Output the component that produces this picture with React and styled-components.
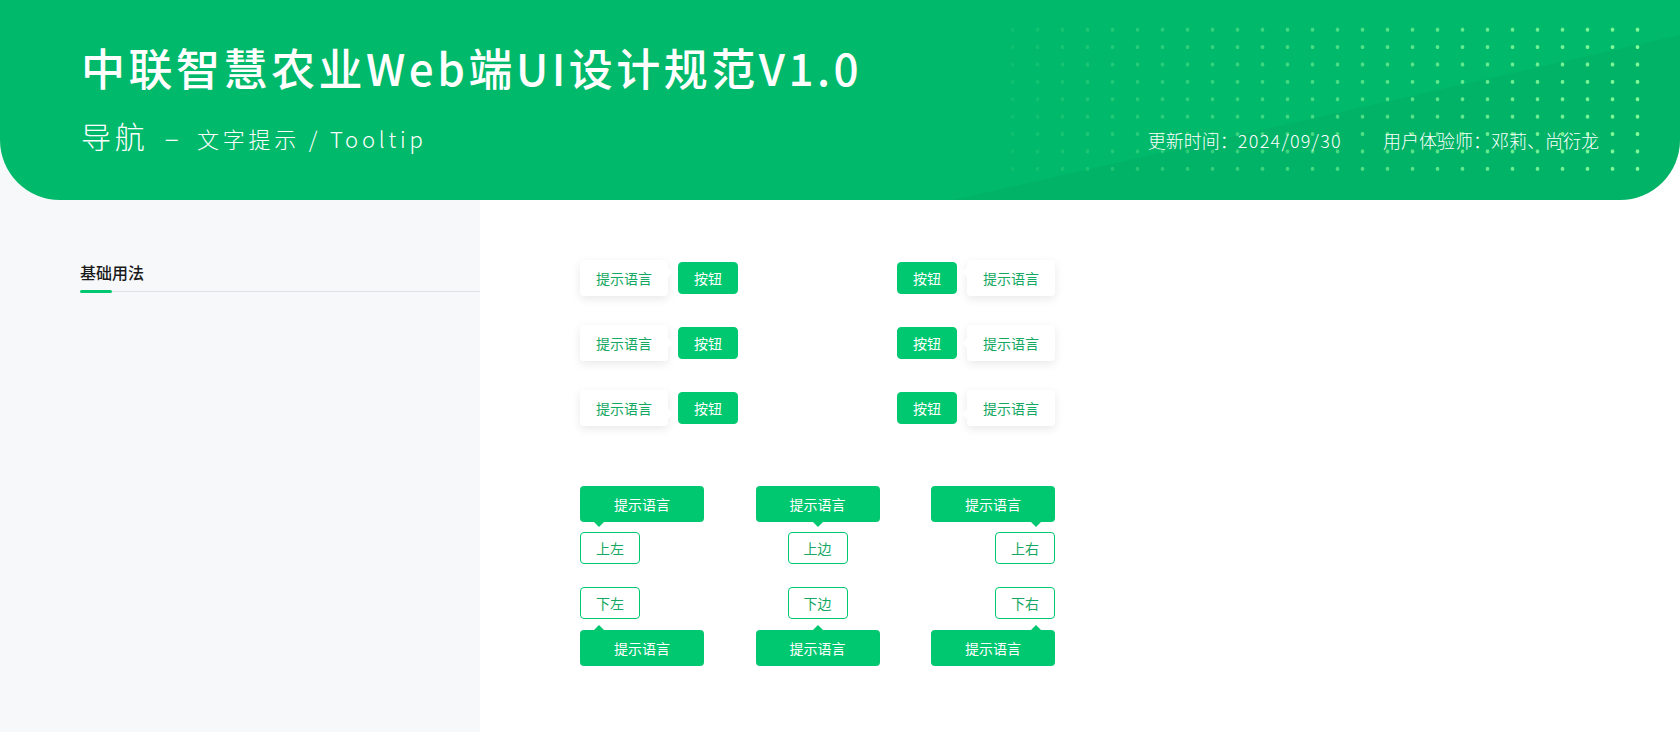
import styled, { createGlobalStyle, css } from 'styled-components';

const GREEN = '#00c870';
const TEXT_GREEN = '#14a862';

const GlobalStyle = createGlobalStyle`
  html, body {
    margin: 0;
    padding: 0;
  }
  body {
    font-family: "Noto Sans CJK SC", "Noto Sans", sans-serif;
    -webkit-font-smoothing: antialiased;
  }
`;

const Page = styled.div`
  min-height: 100vh;
  display: flex;
  flex-direction: column;
  background: linear-gradient(to right, #f7f8fa 480px, #ffffff 480px);
`;

const Header = styled.header`
  position: relative;
  height: 200px;
  box-sizing: border-box;
  padding: 45px 81px 0 81px;
  background: #00b96a;
  border-radius: 0 0 60px 60px;
  overflow: hidden;
  color: #fff;

  &::before {
    content: '';
    position: absolute;
    inset: 0;
    background: rgba(0, 0, 0, 0.03);
    clip-path: polygon(953px 200px, 1680px 35px, 1680px 200px);
  }
`;

const Dots = styled.div`
  position: absolute;
  left: 1000px;
  top: 21px;
  width: 650px;
  height: 157px;
  background-image: radial-gradient(circle, rgba(136, 252, 155, 1) 1.6px, transparent 2.2px);
  background-size: 25px 17.4px;
  -webkit-mask-image: linear-gradient(to right, rgba(0, 0, 0, 0.08) 0%, rgba(0, 0, 0, 0.45) 40%, #000 100%);
  mask-image: linear-gradient(to right, rgba(0, 0, 0, 0.08) 0%, rgba(0, 0, 0, 0.45) 40%, #000 100%);
`;

const Title = styled.h1`
  position: relative;
  margin: 0;
  font-size: 44px;
  line-height: 44px;
  font-weight: 500;
  letter-spacing: 3.5px;
`;

const SubRow = styled.div`
  position: relative;
  display: flex;
  justify-content: space-between;
  align-items: baseline;
  margin-top: 31px;
  line-height: 1;
`;

const Subtitle = styled.div`
  font-weight: 300;
  letter-spacing: 3.8px;
`;

const SubMain = styled.span`
  font-size: 30px;
`;

const SubMinor = styled.span`
  font-size: 22px;
`;

const Dash = styled.span`
  font-size: 27px;
  letter-spacing: 0;
  margin: 0 18px 0 16px;
`;

const Meta = styled.div`
  display: flex;
  gap: 41px;
  font-size: 18px;
  font-weight: 300;
`;

const Digits = styled.span`
  letter-spacing: 1.3px;
`;

const Body = styled.div`
  display: flex;
  flex: 1;
`;

const Sidebar = styled.aside`
  width: 480px;
  flex-shrink: 0;
  box-sizing: border-box;
  padding: 64px 0 0 80px;
`;

const TabBar = styled.div`
  display: flex;
  border-bottom: 1px solid #dfe1e6;
`;

const Tab = styled.div`
  position: relative;
  padding-bottom: 11px;
  font-size: 16px;
  line-height: 16px;
  font-weight: 500;
  color: #1a1a1a;

  &::after {
    content: '';
    position: absolute;
    left: 0;
    bottom: -2px;
    width: 32px;
    height: 3px;
    border-radius: 2px;
    background: ${GREEN};
  }
`;

const Content = styled.main`
  flex: 1;
  padding: 60px 0 0 100px;
`;

const SideSection = styled.div`
  width: 475px;
  display: flex;
  flex-direction: column;
  gap: 29px;
`;

const SideRow = styled.div`
  display: flex;
  justify-content: space-between;
  align-items: center;
  height: 36px;
`;

const SideGroup = styled.div`
  display: flex;
  align-items: center;
  gap: 10px;
`;

const Button = styled.div`
  width: 60px;
  height: 32px;
  box-sizing: border-box;
  border-radius: 4px;
  font-size: 14px;
  line-height: 30px;
  text-align: center;
  ${({ $outline }) =>
    $outline
      ? css`
          background: #fff;
          border: 1px solid ${GREEN};
          color: ${TEXT_GREEN};
        `
      : css`
          background: ${GREEN};
          border: 1px solid ${GREEN};
          color: #fff;
        `}
  align-self: ${({ $align = 'center' }) => $align};
`;

const arrowY = {
  top: css`top: 7px;`,
  middle: css`top: calc(50% - 5px);`,
  bottom: css`top: 19px;`,
};

const LightTip = styled.div`
  position: relative;
  width: 88px;
  height: 36px;
  line-height: 36px;
  text-align: center;
  font-size: 14px;
  color: ${TEXT_GREEN};
  background: #fff;
  border-radius: 4px;
  box-shadow: 0 3px 10px rgba(0, 0, 0, 0.09);

  &::after {
    content: '';
    position: absolute;
    ${({ $arrow }) => arrowY[$arrow]}
    border-top: 5px solid transparent;
    border-bottom: 5px solid transparent;
    ${({ $side }) =>
      $side === 'right'
        ? css`
            right: -5px;
            border-left: 5px solid #fff;
          `
        : css`
            left: -5px;
            border-right: 5px solid #fff;
          `}
  }
`;

const arrowX = {
  start: css`left: 14px;`,
  center: css`left: calc(50% - 5px);`,
  end: css`right: 14px;`,
};

const GreenTip = styled.div`
  position: relative;
  width: 124px;
  height: 36px;
  line-height: 36px;
  text-align: center;
  font-size: 14px;
  color: #fff;
  background: ${GREEN};
  border-radius: 4px;

  &::after {
    content: '';
    position: absolute;
    ${({ $arrow }) => arrowX[$arrow]}
    border-left: 5px solid transparent;
    border-right: 5px solid transparent;
    ${({ $dir }) =>
      $dir === 'down'
        ? css`
            bottom: -5px;
            border-top: 5px solid ${GREEN};
          `
        : css`
            top: -5px;
            border-bottom: 5px solid ${GREEN};
          `}
  }
`;

const PlaceSection = styled.div`
  width: 475px;
  margin-top: 60px;
  display: grid;
  grid-template-columns: repeat(3, 124px);
  justify-content: space-between;
`;

const PlaceColumn = styled.div`
  display: flex;
  flex-direction: column;
  gap: 23px;
`;

const PlaceGroup = styled.div`
  display: flex;
  flex-direction: column;
  gap: ${({ $gap }) => $gap}px;
`;

const sideRows = ['top', 'middle', 'bottom'];

const placements = [
  { align: 'flex-start', arrow: 'start', top: '上左', bottom: '下左' },
  { align: 'center', arrow: 'center', top: '上边', bottom: '下边' },
  { align: 'flex-end', arrow: 'end', top: '上右', bottom: '下右' },
];

export default function App() {
  return (
    <Page>
      <GlobalStyle />
      <Header>
        <Dots />
        <Title>中联智慧农业Web端UI设计规范V1.0</Title>
        <SubRow>
          <Subtitle>
            <SubMain>导航</SubMain>
            <Dash>–</Dash>
            <SubMinor>文字提示 / Tooltip</SubMinor>
          </Subtitle>
          <Meta>
            <span>
              更新时间：<Digits>2024/09/30</Digits>
            </span>
            <span>用户体验师：邓莉、尚衍龙</span>
          </Meta>
        </SubRow>
      </Header>
      <Body>
        <Sidebar>
          <TabBar>
            <Tab>基础用法</Tab>
          </TabBar>
        </Sidebar>
        <Content>
          <SideSection>
            {sideRows.map((pos) => (
              <SideRow key={pos}>
                <SideGroup>
                  <LightTip $side="right" $arrow={pos}>提示语言</LightTip>
                  <Button>按钮</Button>
                </SideGroup>
                <SideGroup>
                  <Button>按钮</Button>
                  <LightTip $side="left" $arrow={pos}>提示语言</LightTip>
                </SideGroup>
              </SideRow>
            ))}
          </SideSection>
          <PlaceSection>
            {placements.map((p) => (
              <PlaceColumn key={p.top}>
                <PlaceGroup $gap={10}>
                  <GreenTip $dir="down" $arrow={p.arrow}>提示语言</GreenTip>
                  <Button $outline $align={p.align}>{p.top}</Button>
                </PlaceGroup>
                <PlaceGroup $gap={11}>
                  <Button $outline $align={p.align}>{p.bottom}</Button>
                  <GreenTip $dir="up" $arrow={p.arrow}>提示语言</GreenTip>
                </PlaceGroup>
              </PlaceColumn>
            ))}
          </PlaceSection>
        </Content>
      </Body>
    </Page>
  );
}
